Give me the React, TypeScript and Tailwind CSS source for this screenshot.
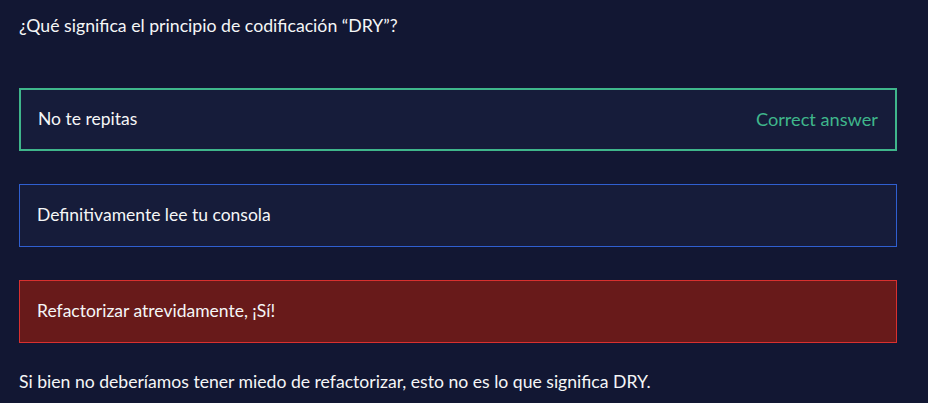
import React from 'react';

type Answer = {
  text: string;
  state: 'correct' | 'neutral' | 'wrong';
};

const answers: Answer[] = [
  { text: 'No te repitas', state: 'correct' },
  { text: 'Definitivamente lee tu consola', state: 'neutral' },
  { text: 'Refactorizar atrevidamente, ¡Sí!', state: 'wrong' },
];

const boxStyles: Record<Answer['state'], string> = {
  correct: 'border-2 border-[#3fb68b] bg-[#161c3a]',
  neutral: 'border border-[#2f5fd0] bg-[#161c3a]',
  wrong: 'border border-[#d9302f] bg-[#681a1a]',
};

const App: React.FC = () => {
  return (
    <div
      className="w-[928px] h-[403px] bg-[#121733] text-[#f5f6f7] overflow-hidden pl-[19px] pr-[31px] pt-[13px]"
      style={{ fontFamily: 'Lato, "Noto Sans", sans-serif' }}
    >
      <p className="text-[17.7px] leading-[26px]">¿Qué significa el principio de codificación “DRY”?</p>
      <div className="flex flex-col gap-[33px] mt-[49px]">
        {answers.map((a) => (
          <div
            key={a.text}
            className={`h-[63px] flex items-center justify-between px-[17px] ${boxStyles[a.state]}`}
          >
            <span className="text-[17.5px]">{a.text}</span>
            {a.state === 'correct' && (
              <span className="text-[18.2px] text-[#3fb68b]">Correct answer</span>
            )}
          </div>
        ))}
      </div>
      <p className="text-[17.6px] mt-[26px]">
        Si bien no deberíamos tener miedo de refactorizar, esto no es lo que significa DRY.
      </p>
    </div>
  );
};

export default App;
